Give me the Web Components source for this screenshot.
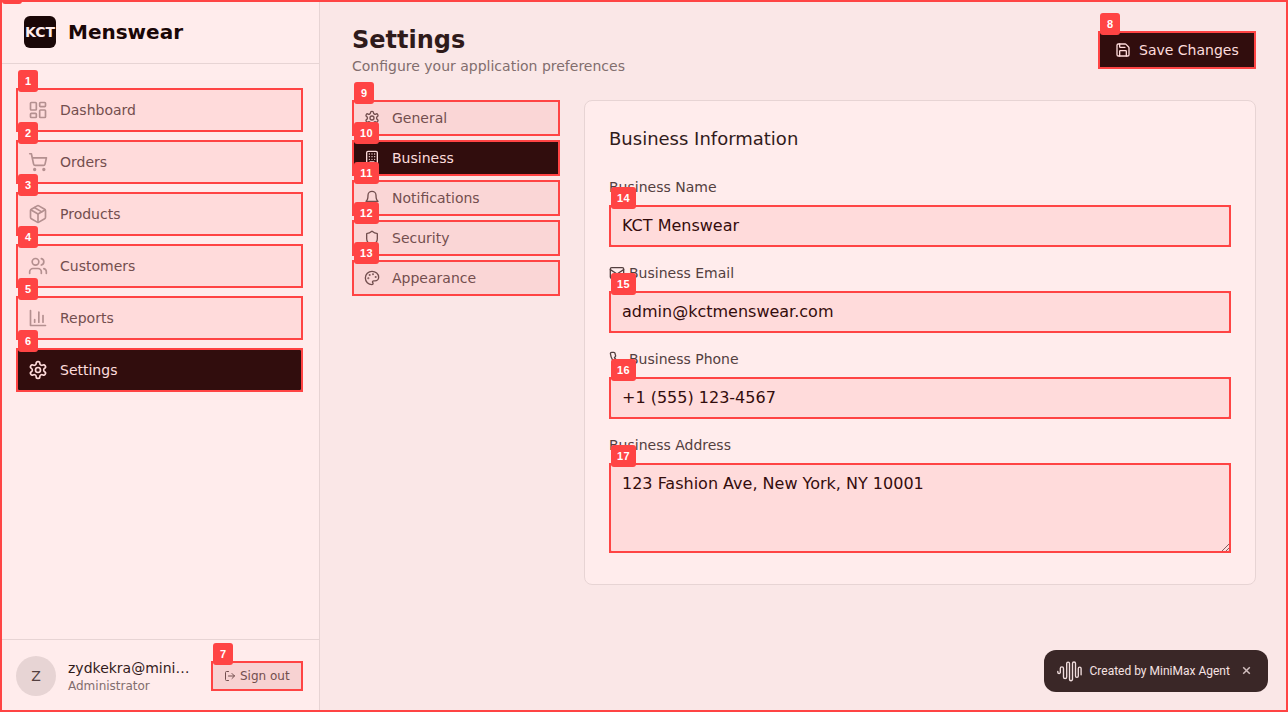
<!DOCTYPE html>
<html lang="en">
<head>
<meta charset="utf-8">
<title>KCT Menswear – Settings</title>
<style>
html,body{margin:0;height:100%;overflow:hidden}
body{font:14px/20px "DejaVu Sans",sans-serif;background:#fafafa;color:#171717}
</style>
</head>
<body>
<kct-app></kct-app>
<script>
const ICONS = {
  dashboard:'<rect width="7" height="9" x="3" y="3" rx="1"/><rect width="7" height="5" x="14" y="3" rx="1"/><rect width="7" height="9" x="14" y="12" rx="1"/><rect width="7" height="5" x="3" y="16" rx="1"/>',
  cart:'<circle cx="8" cy="21" r="1"/><circle cx="19" cy="21" r="1"/><path d="M2.05 2.05h2l2.66 12.42a2 2 0 0 0 2 1.58h9.78a2 2 0 0 0 1.95-1.57l1.65-7.43H5.12"/>',
  box:'<path d="M11 21.73a2 2 0 0 0 2 0l7-4A2 2 0 0 0 21 16V8a2 2 0 0 0-1-1.73l-7-4a2 2 0 0 0-2 0l-7 4A2 2 0 0 0 3 8v8a2 2 0 0 0 1 1.73z"/><path d="M12 22V12"/><path d="m3.3 7 8.7 5 8.7-5"/><path d="m7.5 4.27 9 5.15"/>',
  users:'<path d="M16 21v-2a4 4 0 0 0-4-4H6a4 4 0 0 0-4 4v2"/><circle cx="9" cy="7" r="4"/><path d="M22 21v-2a4 4 0 0 0-3-3.87"/><path d="M16 3.13a4 4 0 0 1 0 7.75"/>',
  chart:'<path d="M3 3v18h18"/><path d="M18 17V9"/><path d="M13 17V5"/><path d="M8 17v-3"/>',
  gear:'<path d="M12.22 2h-.44a2 2 0 0 0-2 2v.18a2 2 0 0 1-1 1.73l-.43.25a2 2 0 0 1-2 0l-.15-.08a2 2 0 0 0-2.73.73l-.22.38a2 2 0 0 0 .73 2.73l.15.1a2 2 0 0 1 1 1.72v.51a2 2 0 0 1-1 1.74l-.15.09a2 2 0 0 0-.73 2.73l.22.38a2 2 0 0 0 2.73.73l.15-.08a2 2 0 0 1 2 0l.43.25a2 2 0 0 1 1 1.73V20a2 2 0 0 0 2 2h.44a2 2 0 0 0 2-2v-.18a2 2 0 0 1 1-1.73l.43-.25a2 2 0 0 1 2 0l.15.08a2 2 0 0 0 2.73-.73l.22-.39a2 2 0 0 0-.73-2.73l-.15-.08a2 2 0 0 1-1-1.74v-.5a2 2 0 0 1 1-1.74l.15-.09a2 2 0 0 0 .73-2.73l-.22-.38a2 2 0 0 0-2.73-.73l-.15.08a2 2 0 0 1-2 0l-.43-.25a2 2 0 0 1-1-1.73V4a2 2 0 0 0-2-2z"/><circle cx="12" cy="12" r="3"/>',
  logout:'<path d="M9 21H5a2 2 0 0 1-2-2V5a2 2 0 0 1 2-2h4"/><path d="m16 17 5-5-5-5"/><path d="M21 12H9"/>',
  save:'<path d="M15.2 3a2 2 0 0 1 1.4.6l3.8 3.8a2 2 0 0 1 .6 1.4V19a2 2 0 0 1-2 2H5a2 2 0 0 1-2-2V5a2 2 0 0 1 2-2z"/><path d="M17 21v-7a1 1 0 0 0-1-1H8a1 1 0 0 0-1 1v7"/><path d="M7 3v4a1 1 0 0 0 1 1h7"/>',
  building:'<rect width="16" height="20" x="4" y="2" rx="2"/><path d="M9 22v-4h6v4M8 6h.01M16 6h.01M12 6h.01M12 10h.01M12 14h.01M16 10h.01M16 14h.01M8 10h.01M8 14h.01"/>',
  bell:'<path d="M6 8a6 6 0 0 1 12 0c0 7 3 9 3 9H3s3-2 3-9"/><path d="M10.3 21a1.94 1.94 0 0 0 3.4 0"/>',
  shield:'<path d="M20 13c0 5-3.5 7.5-7.66 8.95a1 1 0 0 1-.67-.01C7.5 20.5 4 18 4 13V6a1 1 0 0 1 1-1c2 0 4.5-1.2 6.24-2.72a1.17 1.17 0 0 1 1.52 0C14.51 3.81 17 5 19 5a1 1 0 0 1 1 1z"/>',
  palette:'<circle cx="13.5" cy="6.5" r=".5" fill="currentColor"/><circle cx="17.5" cy="10.5" r=".5" fill="currentColor"/><circle cx="8.5" cy="7.5" r=".5" fill="currentColor"/><circle cx="6.5" cy="12.5" r=".5" fill="currentColor"/><path d="M12 2C6.5 2 2 6.5 2 12s4.5 10 10 10c.926 0 1.648-.746 1.648-1.688 0-.437-.18-.835-.437-1.125-.29-.289-.438-.652-.438-1.125a1.64 1.64 0 0 1 1.668-1.668h1.996c3.051 0 5.555-2.503 5.555-5.554C21.965 6.012 17.461 2 12 2z"/>',
  mail:'<rect width="20" height="16" x="2" y="4" rx="2"/><path d="m22 7-8.97 5.7a1.94 1.94 0 0 1-2.06 0L2 7"/>',
  phone:'<path d="M22 16.92v3a2 2 0 0 1-2.18 2 19.79 19.79 0 0 1-8.63-3.07 19.5 19.5 0 0 1-6-6 19.79 19.79 0 0 1-3.07-8.67A2 2 0 0 1 4.11 2h3a2 2 0 0 1 2 1.72 12.84 12.84 0 0 0 .7 2.81 2 2 0 0 1-.45 2.11L8.09 9.91a16 16 0 0 0 6 6l1.27-1.27a2 2 0 0 1 2.11-.45 12.84 12.84 0 0 0 2.81.7A2 2 0 0 1 22 16.92z"/>'
};

function define(name, render) {
  customElements.define(name, class extends HTMLElement {
    connectedCallback() {
      if (this.shadowRoot) return;
      this.attachShadow({ mode: 'open' }).innerHTML = render(k => this.getAttribute(k) || '', this);
    }
  });
}

define('ui-icon', a => `<style>
  :host{display:block;flex:none}svg{display:block}
</style><svg width="${a('size') || 16}" height="${a('size') || 16}" viewBox="0 0 24 24" fill="none" stroke="currentColor" stroke-width="2" stroke-linecap="round" stroke-linejoin="round">${ICONS[a('name')]}</svg>`);

/* Wraps a control and draws a numbered highlight over it. */
define('mark-box', a => `<style>
  :host{display:block;position:relative;box-sizing:border-box}
  .frame{position:absolute;inset:0;border:2px solid #f44;background:rgba(255,68,68,.1);background-clip:padding-box;pointer-events:none}
  .tag{position:absolute;z-index:10;left:2px;top:-18px;height:22px;width:${a('n').length > 1 ? 25 : 20}px;box-sizing:border-box;border-radius:3px;background:#f44;color:#fff;font:bold 11px/22px "Liberation Sans",sans-serif;letter-spacing:${a('n').length > 1 ? '.5px' : '0'};text-align:center}
</style><slot></slot><div class="frame"></div><div class="tag">${a('n')}</div>`);

define('nav-item', a => `<style>
  :host{display:block}
  .row{display:flex;align-items:center;gap:12px;box-sizing:border-box;height:44px;padding:0 12px;border-radius:8px;color:#525252}
  ui-icon{color:#a3a3a3}
  :host([active]) .row{background:#000;color:#fff}
  :host([active]) ui-icon{color:#fff}
</style><mark-box n="${a('n')}"><div class="row"><ui-icon name="${a('icon')}" size="20"></ui-icon><span><slot></slot></span></div></mark-box>`);

define('tab-item', a => `<style>
  :host{display:block}
  .row{display:flex;align-items:center;gap:12px;box-sizing:border-box;height:36px;padding:0 12px;border-radius:6px;color:#525252}
  :host([active]) .row{background:#000;color:#fff}
</style><mark-box n="${a('n')}"><div class="row"><ui-icon name="${a('icon')}"></ui-icon><span><slot></slot></span></div></mark-box>`);

define('form-field', (a, el) => `<style>
  :host{display:block}
  label{display:flex;align-items:center;gap:4px;height:20px;margin-bottom:8px;color:#404040}
  input,textarea{display:block;box-sizing:border-box;width:100%;margin:0;border:1px solid #d4d4d4;border-radius:6px;padding:8px 12px;background:#fff;color:#000;font:16px/24px "DejaVu Sans",sans-serif;outline:0}
  input{height:42px;padding:7px 12px 9px}
  textarea{height:90px;resize:vertical;overflow:auto}
</style><label>${a('icon') ? `<ui-icon name="${a('icon')}"></ui-icon>` : ''}<span>${a('label')}</span></label>
<mark-box n="${a('n')}">${el.hasAttribute('multiline') ? `<textarea spellcheck="false">${a('value')}</textarea>` : `<input type="text" spellcheck="false" value="${a('value')}">`}</mark-box>`);

define('side-bar', () => `<style>
  :host{display:flex;flex-direction:column;box-sizing:border-box;width:320px;flex:none;background:#fff;border-right:1px solid #e5e5e5}
  header{display:flex;align-items:center;gap:12px;height:64px;box-sizing:border-box;padding:0 24px;border-bottom:1px solid #e5e5e5;color:#000;font-weight:bold;font-size:20px;line-height:28px}
  .logo{width:32px;height:32px;border-radius:6px;background:#000;color:#fff;font-size:14px;line-height:32px;display:flex;justify-content:center}
  nav{flex:1;display:flex;flex-direction:column;gap:8px;padding:24px 16px}
  footer{display:flex;align-items:center;gap:12px;height:73px;box-sizing:border-box;padding:0 16px;border-top:1px solid #e5e5e5}
  .avatar{width:40px;height:40px;border-radius:50%;background:#e5e5e5;color:#404040;text-align:center;line-height:40px;flex:none}
  .who{flex:1;min-width:0;white-space:nowrap}
  .role{font-size:12px;line-height:16px;color:#737373}
  .out{display:flex;align-items:center;gap:4px;box-sizing:border-box;width:92px;height:30px;padding:0 12px;border:1px solid #e5e5e5;border-radius:6px;background:#f5f5f5;color:#525252;font-size:12px;line-height:16px;white-space:nowrap}
</style>
<header><div class="logo">KCT</div><span>Menswear</span></header>
<nav>
<nav-item n="1" icon="dashboard">Dashboard</nav-item>
<nav-item n="2" icon="cart">Orders</nav-item>
<nav-item n="3" icon="box">Products</nav-item>
<nav-item n="4" icon="users">Customers</nav-item>
<nav-item n="5" icon="chart">Reports</nav-item>
<nav-item n="6" icon="gear" active>Settings</nav-item>
</nav>
<footer><div class="avatar">Z</div><div class="who"><div>zydkekra@mini…</div><div class="role">Administrator</div></div>
<mark-box n="7"><div class="out"><ui-icon name="logout" size="12"></ui-icon><span>Sign out</span></div></mark-box></footer>`);

define('settings-page', () => `<style>
  :host{display:block;flex:1;min-width:0;box-sizing:border-box;padding:24px 32px}
  header{display:flex;align-items:center;justify-content:space-between;height:52px;margin-bottom:24px}
  h1{margin:0;font-size:24px;line-height:32px}
  p{margin:0;color:#737373}
  .save{display:flex;align-items:center;gap:8px;box-sizing:border-box;width:158px;height:38px;padding:0 17px;border-radius:6px;background:#000;color:#fff;white-space:nowrap}
  .cols{display:grid;grid-template-columns:208px 1fr;gap:24px;align-items:start}
  .tabs{display:flex;flex-direction:column;gap:4px}
  section{display:flex;flex-direction:column;gap:16px;background:#fff;border:1px solid #e5e5e5;border-radius:8px;padding:24px 24px 31px}
  h2{margin:0 0 8px;font-size:18px;line-height:28px;font-weight:400}
</style>
<header><div><h1>Settings</h1><p>Configure your application preferences</p></div>
<mark-box n="8"><div class="save"><ui-icon name="save"></ui-icon><span>Save Changes</span></div></mark-box></header>
<div class="cols"><div class="tabs">
<tab-item n="9" icon="gear">General</tab-item>
<tab-item n="10" icon="building" active>Business</tab-item>
<tab-item n="11" icon="bell">Notifications</tab-item>
<tab-item n="12" icon="shield">Security</tab-item>
<tab-item n="13" icon="palette">Appearance</tab-item>
</div>
<section><h2>Business Information</h2>
<form-field n="14" label="Business Name" value="KCT Menswear"></form-field>
<form-field n="15" icon="mail" label="Business Email" value="admin@kctmenswear.com"></form-field>
<form-field n="16" icon="phone" label="Business Phone" value="+1 (555) 123-4567"></form-field>
<form-field n="17" label="Business Address" value="123 Fashion Ave, New York, NY 10001" multiline></form-field>
</section></div>`);

define('agent-toast', () => `<style>
  :host{position:absolute;right:20px;bottom:20px;width:224px;height:42px;box-sizing:border-box;padding:0 16px 0 13px;display:flex;align-items:center;border-radius:12px;background:#242424;color:#f5f5f5;font:400 12px/16px Roboto,sans-serif;white-space:nowrap}
  .mark{margin-right:7.5px;flex:none}
  span{flex:1}
  .x{flex:none;margin:0 1px 1px 0;color:#ccc}
</style>
<svg class="mark" width="25" height="21" viewBox="0 0 25 21" fill="none" stroke="#f0f0f0" stroke-width="1.35" stroke-linecap="round"><path d="M.8 10.5v.7a1.2 1.2 0 0 0 2.5 0V7.5a1.6 1.6 0 0 1 3.2 0v8.4a1.6 1.6 0 0 0 3.2 0V2.5a1.4 1.4 0 0 1 2.8 0v15.7a1.5 1.5 0 0 0 3 0V2.5a1.5 1.5 0 0 1 3 0v12.5a1.4 1.4 0 0 0 2.8 0V7.5a1.4 1.4 0 0 1 2.8 0v6.3"/></svg>
<span>Created by MiniMax Agent</span>
<svg class="x" width="9" height="9" viewBox="0 0 9 9" stroke="currentColor" stroke-width="1.5"><path d="M1.2 1.2l6.6 6.6M7.8 1.2L1.2 7.8"/></svg>`);

define('kct-app', () => `<style>
  :host{display:flex;position:relative;height:712px;overflow:hidden}
  .veil{position:absolute;inset:0;z-index:5;border:2px solid #f44;background:rgba(255,68,68,.1);background-clip:padding-box;pointer-events:none}
  .zero{position:absolute;z-index:10;left:2px;top:-18px;width:20px;height:22px;border-radius:3px;background:#f44}
</style><side-bar></side-bar><settings-page></settings-page><agent-toast></agent-toast><div class="veil"></div><div class="zero"></div>`);
</script>
</body>
</html>
